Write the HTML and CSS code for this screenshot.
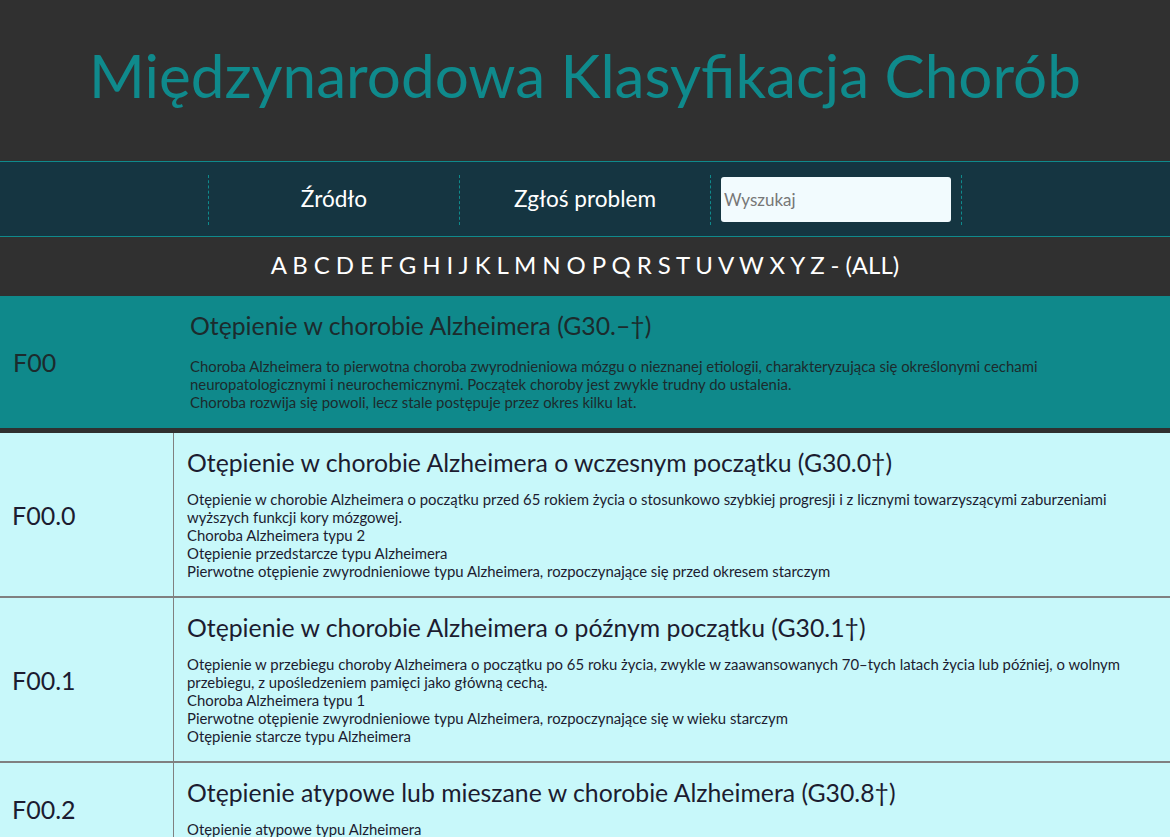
FILE: index.html
```html
<!DOCTYPE html>
<html lang="pl">
<head>
<meta charset="utf-8">
<title>Międzynarodowa Klasyfikacja Chorób</title>
<link rel="stylesheet" href="styles.css">
</head>
<body>
<header class="site-header">
  <h1 class="site-title">Międzynarodowa Klasyfikacja Chorób</h1>
</header>
<nav class="main-nav">
  <ul class="menu">
    <li class="menu-item"><a href="#">Źródło</a></li>
    <li class="menu-item"><a href="#">Zgłoś problem</a></li>
    <li class="menu-item"><input class="search" type="text" placeholder="Wyszukaj"></li>
  </ul>
</nav>
<div class="alphabet">
  <a href="#">A</a> <a href="#">B</a> <a href="#">C</a> <a href="#">D</a> <a href="#">E</a> <a href="#">F</a> <a href="#">G</a> <a href="#">H</a> <a href="#">I</a> <a href="#">J</a> <a href="#">K</a> <a href="#">L</a> <a href="#">M</a> <a href="#">N</a> <a href="#">O</a> <a href="#">P</a> <a href="#">Q</a> <a href="#">R</a> <a href="#">S</a> <a href="#">T</a> <a href="#">U</a> <a href="#">V</a> <a href="#">W</a> <a href="#">X</a> <a href="#">Y</a> <a href="#">Z</a> <a href="#">-</a> <a href="#">(ALL)</a>
</div>
<section class="category">
  <div class="code">F00</div>
  <div class="body">
    <h2 class="entry-title">Otępienie w chorobie Alzheimera (G30.–†)</h2>
    <p class="desc">Choroba Alzheimera to pierwotna choroba zwyrodnieniowa mózgu o nieznanej etiologii, charakteryzująca się określonymi cechami neuropatologicznymi i neurochemicznymi. Początek choroby jest zwykle trudny do ustalenia.<br>Choroba rozwija się powoli, lecz stale postępuje przez okres kilku lat.</p>
  </div>
</section>
<div class="entries">
  <div class="entry">
    <div class="code">F00.0</div>
    <div class="body">
      <h3 class="entry-title">Otępienie w chorobie Alzheimera o wczesnym początku (G30.0†)</h3>
      <p class="desc">Otępienie w chorobie Alzheimera o początku przed 65 rokiem życia o stosunkowo szybkiej progresji i z licznymi towarzyszącymi zaburzeniami wyższych funkcji kory mózgowej.<br>Choroba Alzheimera typu 2<br>Otępienie przedstarcze typu Alzheimera<br>Pierwotne otępienie zwyrodnieniowe typu Alzheimera, rozpoczynające się przed okresem starczym</p>
    </div>
  </div>
  <div class="entry">
    <div class="code">F00.1</div>
    <div class="body">
      <h3 class="entry-title">Otępienie w chorobie Alzheimera o późnym początku (G30.1†)</h3>
      <p class="desc">Otępienie w przebiegu choroby Alzheimera o początku po 65 roku życia, zwykle w zaawansowanych 70–tych latach życia lub później, o wolnym przebiegu, z upośledzeniem pamięci jako główną cechą.<br>Choroba Alzheimera typu 1<br>Pierwotne otępienie zwyrodnieniowe typu Alzheimera, rozpoczynające się w wieku starczym<br>Otępienie starcze typu Alzheimera</p>
    </div>
  </div>
  <div class="entry">
    <div class="code">F00.2</div>
    <div class="body">
      <h3 class="entry-title">Otępienie atypowe lub mieszane w chorobie Alzheimera (G30.8†)</h3>
      <p class="desc">Otępienie atypowe typu Alzheimera</p>
    </div>
  </div>
</div>
</body>
</html>
```

FILE: styles.css
```css
* { box-sizing: border-box; }
html, body {
  margin: 0;
  padding: 0;
  background: #c8f8fa;
  font-family: Lato, "Open Sans", "Liberation Sans", sans-serif;
}
a { text-decoration: none; color: inherit; }

.site-header {
  background: #303030;
  height: 161px;
  display: flex;
  align-items: center;
  justify-content: center;
}
.site-title {
  margin: 0;
  font-size: 60.2px;
  font-weight: 400;
  color: #0f8a8c;
  line-height: 1;
  padding-bottom: 10px;
}

.main-nav {
  background: #153541;
  border-top: 1px solid #0f8a8c;
  border-bottom: 1px solid #0f8a8c;
  height: 76px;
  display: flex;
  align-items: center;
  justify-content: center;
}
.menu {
  list-style: none;
  margin: 1px 0 0;
  padding: 0;
  display: flex;
}
.menu-item {
  width: 251px;
  height: 50px;
  border-left: 1px dashed #0f8a8c;
  display: flex;
  align-items: center;
  justify-content: center;
  color: #fff;
  font-size: 22.6px;
}
.menu-item a { padding-bottom: 3px; }
.menu-item:last-child { border-right: 1px dashed #0f8a8c; width: 252px; }
.search {
  width: 230px;
  height: 45px;
  border: 0;
  border-radius: 3px;
  background: #f2fbfe;
  font-family: inherit;
  font-size: 17px;
  padding: 0 3px;
  color: #333;
}
.search::placeholder { color: #777; }

.alphabet {
  background: #303030;
  height: 59px;
  line-height: 55px;
  padding-bottom: 4px;
  text-align: center;
  color: #fff;
  font-size: 24px;
  word-spacing: -0.2px;
}

.category {
  background: #0f898b;
  border-bottom: 5px solid #303030;
  display: grid;
  grid-template-columns: 174px 1fr;
  color: #1c2b2d;
}
.code {
  display: flex;
  align-items: center;
  padding-left: 13px;
  font-size: 25px;
}
.body {
  padding: 15px 20px 17px 16px;
}
.entry-title {
  margin: 0 0 13px;
  font-size: 24.8px;
  font-weight: 400;
  line-height: 29px;
}
.category .entry-title { margin-bottom: 17px; }
.desc {
  margin: 0;
  font-size: 14.9px;
  line-height: 18px;
}

.entry {
  display: grid;
  grid-template-columns: 174px 1fr;
  border-bottom: 2px solid #808080;
  color: #1c1c30;
}
.entry .code {
  border-right: 1px solid #808080;
  padding-left: 12px;
}
.entry .body { padding: 15px 20px 16px 13px; }
```
